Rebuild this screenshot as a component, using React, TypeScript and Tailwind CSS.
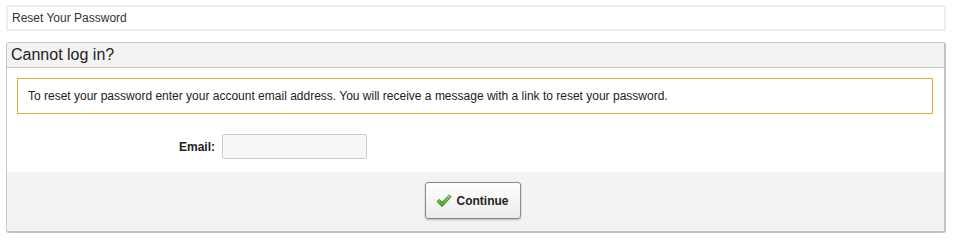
import React from "react";

function CheckIcon() {
  return (
    <svg width="16" height="14" viewBox="0 0 16 14" className="block">
      <defs>
        <linearGradient id="chk" x1="0" y1="0" x2="0" y2="1">
          <stop offset="0" stopColor="#9be36a" />
          <stop offset="1" stopColor="#3f9a1c" />
        </linearGradient>
      </defs>
      <path
        d="M1 7.6 L3.4 5.4 L6 8.2 L13.4 1 L15.2 2.8 L6.1 12.6 Z"
        fill="url(#chk)"
        stroke="#2f7a14"
        strokeWidth="0.9"
        strokeLinejoin="round"
      />
    </svg>
  );
}

export default function App() {
  return (
    <div className="w-[954px] h-[241px] bg-white pt-[5px] pl-[6px] pr-[8px] font-['Liberation_Sans',Arial,sans-serif] text-[#222]">
      <div className="h-[26px] border-2 border-[#eeeeee] flex items-center pl-[4px] text-[12px] text-[#333]">
        Reset Your Password
      </div>
      <div className="mt-[11px] h-[191px] border-l border-t border-[#c8c8c8] border-r-2 border-b-2 border-r-[#c2c2c2] border-b-[#c2c2c2] rounded-[3px] flex flex-col overflow-hidden">
        <div className="h-[25px] bg-[#f3f3f3] border-b border-[#c4c4c4] flex items-center pl-[4px] text-[16px] text-[#222] leading-none">
          Cannot log in?
        </div>
        <div className="bg-white pt-[10px] pl-[10px] pr-[11px]">
          <div className="h-[36px] border border-[#e6a73d] flex items-center pl-[10px] text-[12px] text-[#222]">
            To reset your password enter your account email address. You will receive a message with a link to reset your password.
          </div>
          <div className="flex items-center mt-[20px] pb-[13px]">
            <label className="w-[198px] text-right text-[12px] font-bold text-[#222]">Email:</label>
            <input
              type="text"
              className="ml-[7px] w-[145px] h-[25px] bg-[#f7f7f7] border border-[#cccccc] rounded-[2px] outline-none"
            />
          </div>
        </div>
        <div className="flex-1 bg-[#f3f3f3] flex justify-center pt-[10px] pr-[6px]">
          <button className="w-[96px] h-[37px] border border-[#888888] rounded-[3px] bg-gradient-to-b from-white to-[#ececec] shadow-[0_1px_2px_rgba(0,0,0,0.25)] flex items-center pl-[10px] gap-[5px] text-[12px] font-bold text-[#222]">
            <CheckIcon />
            <span>Continue</span>
          </button>
        </div>
      </div>
    </div>
  );
}
